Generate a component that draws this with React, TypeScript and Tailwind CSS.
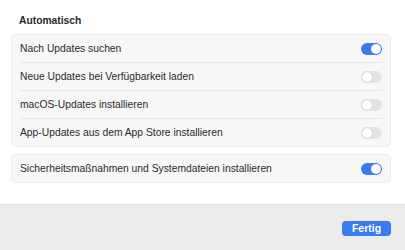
import React from "react";

function Toggle({ on }: { on: boolean }) {
  return on ? (
    <div className="flex h-[12px] w-[21px] items-center justify-end rounded-full bg-[#3a7af2] px-[1px]">
      <div className="h-[10px] w-[10px] rounded-full bg-white" />
    </div>
  ) : (
    <div className="flex h-[12px] w-[21px] items-center justify-start rounded-full bg-[#e3e3e3] px-[1px]">
      <div className="h-[10px] w-[10px] rounded-full bg-white shadow-[0_0_1px_rgba(0,0,0,0.3)]" />
    </div>
  );
}

function Row({ label, on, last }: { label: string; on: boolean; last?: boolean }) {
  return (
    <div className="px-[8px]">
      <div
        className={
          last
            ? "flex h-[27px] items-center justify-between"
            : "flex h-[28px] items-center justify-between border-b border-[#e6e6e6]"
        }
      >
        <span className="text-[10.3px] text-[#2a2a2a]">{label}</span>
        <Toggle on={on} />
      </div>
    </div>
  );
}

export default function App() {
  return (
    <div
      className="flex h-[250px] w-[405px] flex-col bg-white"
      style={{ fontFamily: '"Liberation Sans", Arial, sans-serif' }}
    >
      <div className="flex-1 pl-[11px] pr-[14px]">
        <div className="pl-[8px] pt-[14px] pb-[6px] text-[10.3px] font-bold leading-[14px] text-[#2a2a2a]">
          Automatisch
        </div>
        <div className="rounded-[5px] border border-[#ececec] bg-[#f7f7f7]">
          <Row label="Nach Updates suchen" on />
          <Row label="Neue Updates bei Verfügbarkeit laden" on={false} />
          <Row label="macOS-Updates installieren" on={false} />
          <Row label="App-Updates aus dem App Store installieren" on={false} last />
        </div>
        <div className="mt-[7px] rounded-[5px] border border-[#ececec] bg-[#f7f7f7]">
          <Row label="Sicherheitsmaßnahmen und Systemdateien installieren" on last />
        </div>
      </div>
      <div className="flex h-[46px] items-start justify-end border-t border-[#e2e2e2] bg-[#ececec] pr-[14px] pt-[16px]">
        <button className="flex h-[15px] w-[49px] items-center justify-center rounded-[4px] bg-[#3a7af2] text-[10.5px] font-bold text-white">
          Fertig
        </button>
      </div>
    </div>
  );
}
